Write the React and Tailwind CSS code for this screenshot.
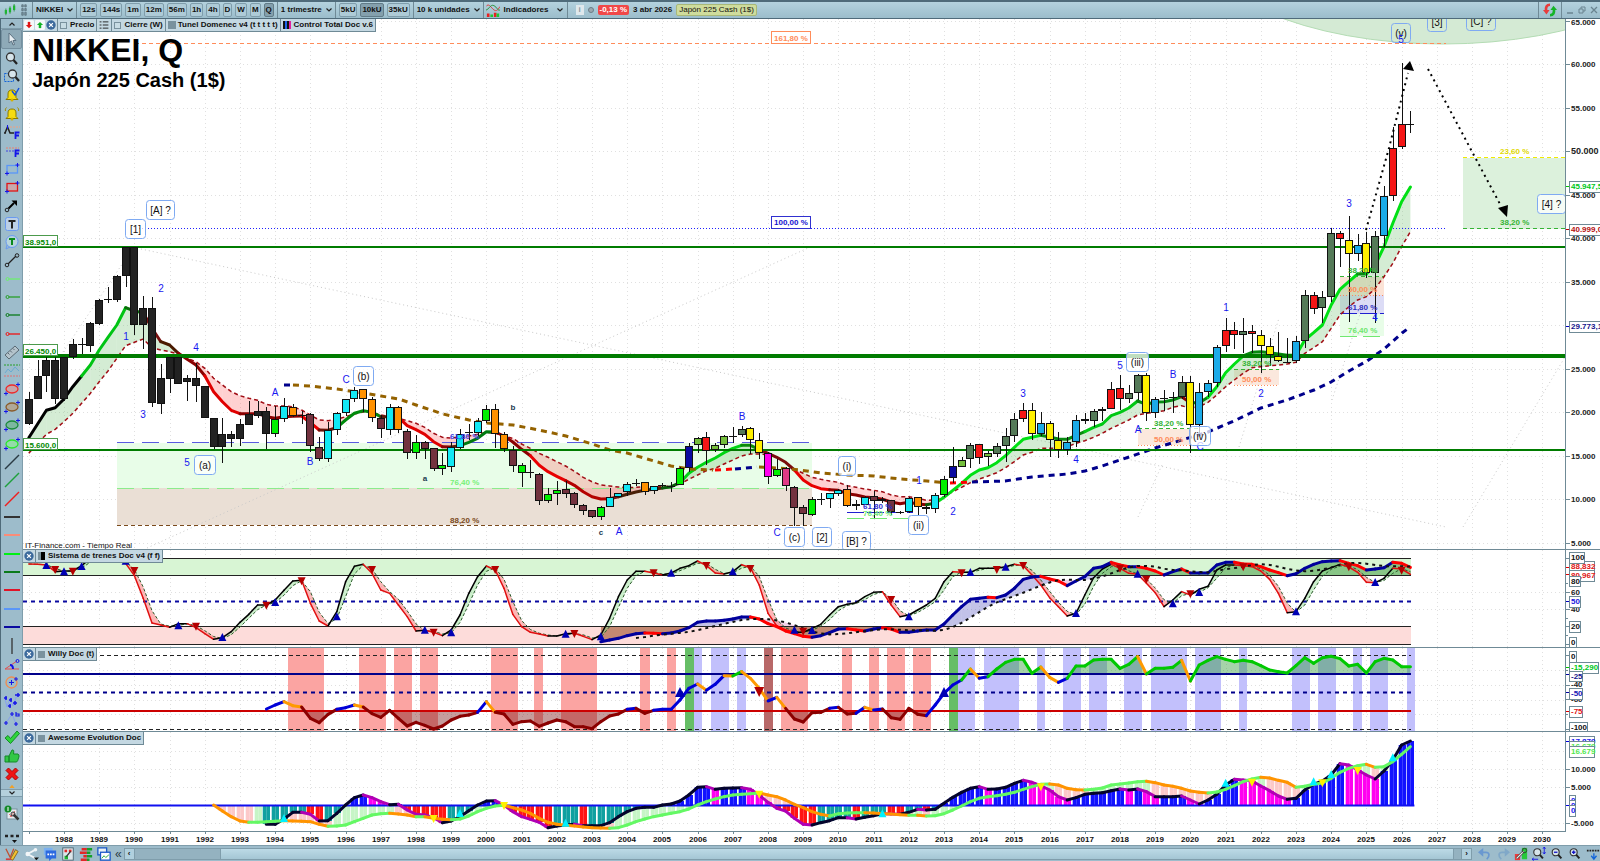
import React from "react";

const FONT = '"Liberation Sans", Arial, sans-serif';

/* ---------- time scale ---------- */
const X0 = 28.8;
const STEP = 8.8;
const LAST = 157;
const qx = (i) => X0 + STEP * i;
const YEARS = Array.from({ length: 44 }, (_, k) => 1987 + k);
const yearX = (y) => qx((y - 1987) * 4);

/* values are stored in thirds of a unit below a base line */
const series = (...parts) => {
  const out = {};
  parts.forEach(([start, base, values]) =>
    values.forEach((v, k) => {
      out[start + k] = base + v / 3;
    })
  );
  return out;
};
const keysOf = (s) => Object.keys(s).map(Number).sort((a, b) => a - b);
const linePath = (s, from = -1, to = 999) =>
  keysOf(s)
    .filter((i) => i >= from && i <= to)
    .map((i, k) => `${k ? "L" : "M"}${qx(i).toFixed(1)} ${s[i].toFixed(1)}`)
    .join("");
const poly = (pts) => pts.map((p, k) => `${k ? "L" : "M"}${p[0]} ${p[1]}`).join("");

/* ---------- candles: top, bottom, high, low, colour ---------- */
const C = {
  k: "#222222", g: "#00f000", c: "#12e8f4", o: "#ff9100", p: "#73323f", n: "#0a0aa0",
  l: "#74bf3c", r: "#f51616", d: "#557a58", y: "#fff000", m: "#ff00ee", q: "#e03a86", s: "#1cabe8",
};
const CANDLES = [
  [0, 200, `596 671 577 675 k;527 597 480 597 k;480 528 470 575 k;480 597 470 613 k;470 597 470 604 k;433 472 418 478 k;431 433 415 462 k;370 437 366 455 k;300 371 297 374 k;297 299 262 308 k;227 300 224 305 k;142 228 142 260 k;142 376 142 405 k;325 376 287 448 k;325 610 292 620 k;535 611 492 641 k;470 536 470 580 k;470 551 470 553 k;535 547 524 602 k;535 558 490 606 k;558 653 558 653 k;654 741 654 748 k;703 741 655 789 k;703 716 694 741 k;673 716 658 737 k;641 674 602 674 k;634 647 602 655 k;633 703 620 748 k;658 703 618 710 g;618 658 595 666 c;622 648 612 652 o;644 646 633 672 k;643 737 640 757 p;740 778 710 784 p;691 778 665 785 c;640 690 635 706 c;598 638 596 648 c;571 598 562 606 c;568 596 568 635 o;596 653 590 666 o;653 688 645 713 p;622 690 612 705 c;622 690 617 698 o;694 758 688 778 p;727 758 706 778 g;727 747 722 777 p;744 808 744 812 p;796 808 758 824 g;740 800 725 817 c;703 744 688 748 c;697 699 672 720 k;664 698 655 708 c;628 664 616 670 g;628 703 612 745 o`],
  [54, 380, `163 207 157 215 o;210 259 197 275 p;256 278 248 321 g;276 278 240 293 k;282 364 280 375 p;343 364 323 368 g;331 341 303 374 g;328 341 303 355 p;340 374 337 384 p;376 394 373 405 p;391 410 391 415 p;382 412 378 421 g;352 382 325 382 c;340 352 338 352 c;311 336 307 348 c;309 311 297 318 k;307 337 307 345 o;319 334 318 341 c;314 319 308 321 g;317 319 306 337 k;264 316 260 316 g;199 263 190 275 n;174 194 170 218 l;172 214 157 255 r;196 211 190 217 l;169 196 165 205 l;168 170 140 190 k;147 166 138 172 d;144 181 142 222 y;181 220 160 237 y;220 291 215 312 m;267 287 237 292 g;265 317 262 333 q;322 384 318 437 p;382 401 374 437 p;358 404 352 407 g;356 358 338 374 k;340 356 338 384 c;329 341 327 347 c;328 377 316 381 o;373 377 361 389 g;352 375 348 375 c;348 364 333 413 p;358 364 352 370 g;360 395 360 405 p;395 400 393 403 n;355 397 350 400 c;352 382 350 408 o;380 387 378 402 o;344 386 340 398 c;296 346 288 350 g;259 294 200 308 n;239 260 230 260 l;194 238 190 265 d;192 233 192 253 r`],
  [109, 200, `760 772 753 797 l;738 761 729 772 d;707 737 685 785 d;656 707 640 725 d;631 656 610 665 r;631 701 610 720 y;668 703 636 708 s;668 721 662 772 y;721 750 695 773 y;727 750 710 765 s;661 725 645 740 s;658 663 640 672 y;634 664 628 682 d;626 634 622 664 d;566 626 546 628 r;563 598 526 630 r;578 598 555 610 d;526 578 522 600 d;526 640 520 664 y;596 640 590 655 s;594 596 570 632 k;590 594 577 640 s;547 590 528 598 d;547 674 528 760 y;576 674 550 700 s;548 576 540 590 s;442 548 436 560 s;391 438 355 455 r;391 406 366 448 r;394 406 355 458 d;394 403 375 460 r;404 438 391 518 y;439 465 415 498 y;468 484 395 486 y;485 487 415 490 k;424 484 408 490 s;286 424 270 445 d;286 328 275 343 r;290 325 272 368 d;98 290 84 305 d;98 118 94 202 r;119 163 49 365 y;134 163 103 182 s;128 220 97 235 y;108 220 92 370 d`],
  [154, 10, `559 678 528 710 s;414 557 352 572 r;343 412 160 417 r;342 344 303 370 k`],
].flatMap(([start, base, rows]) =>
  rows.split(";").map((row, k) => {
    const [t, b, h, l, c] = row.split(" ");
    return { i: start + k, t: base + t / 3, b: base + b / 3, h: base + h / 3, l: base + l / 3, c: C[c] };
  })
);

/* ---------- moving averages ---------- */
const FAST = series(
  [0, 200, [713, 672, 631, 623, 597, 560, 528, 495, 450, 412, 375, 323, 333, 338, 385, 425, 435, 460, 478, 495, 527, 575, 605, 631, 641, 641, 641, 650, 655, 650, 649, 648, 668, 690, 691, 683, 660, 640, 632, 637, 650, 650, 652, 677, 689, 703, 725, 740, 741, 737, 727, 715, 695]],
  [53, 380, [156, 168, 186, 208, 227, 256, 275, 289, 302, 316, 335, 350, 357, 356, 350, 343, 336, 331, 328, 324, 320, 308, 280, 262, 247, 234, 218, 205, 196, 196, 208, 220, 232, 247, 270, 300, 317, 326, 329, 331, 341, 345, 351, 353, 358, 366, 371, 367, 372, 374, 370, 352, 331, 310, 286, 270]],
  [109, 200, [803, 788, 767, 742, 718, 712, 706, 711, 717, 718, 706, 695, 682, 672, 647, 637, 624, 603, 613, 606, 605, 600, 590, 608, 608, 592, 560, 518, 492, 468, 457, 455, 458, 462, 466, 466, 420, 398, 375, 315, 268, 245, 222, 222, 195, 140]],
  [155, 10, [640, 575, 531]]
);
const FAST_COLOURS = [
  [0, 6, "#000000"], [6, 11, "#00c414"], [11, 13, "#0a6e0a"], [13, 15, "#7a1010"], [15, 17, "#4a1a00"],
  [17, 20, "#8b0000"], [20, 24, "#e00000"], [24, 31, "#8b0000"], [31, 33, "#e80000"], [33, 35, "#6a1408"],
  [35, 40, "#008a0c"], [40, 42, "#5a1c08"], [42, 47, "#e00000"], [47, 48, "#8b0000"], [48, 49, "#5a1c08"],
  [49, 53, "#007a10"], [53, 57, "#8b0000"], [57, 61, "#e80000"], [61, 66, "#b40000"], [66, 67, "#7a1010"],
  [67, 72, "#4a2008"], [72, 74, "#0a5c0a"], [74, 81, "#00d414"], [81, 83, "#0a8a0a"], [83, 87, "#7a0c0c"],
  [87, 91, "#e80000"], [91, 102, "#8b0000"], [102, 103, "#0a5c0a"], [103, 115, "#00e014"], [115, 120, "#078a10"],
  [120, 126, "#00c814"], [126, 131, "#078a10"], [131, 132, "#8b0000"], [132, 134, "#078a10"], [134, 138, "#00e014"],
  [138, 144, "#078a10"], [144, 151, "#00e014"], [151, 152, "#078a10"], [152, 157, "#00e014"],
];
const SLOW = series(
  [0, 200, [760, 730, 703, 688, 665, 640, 610, 580, 545, 513, 475, 437, 427, 417, 443, 450, 455, 462, 475, 485, 505, 535, 555, 575, 587, 595, 601, 613, 618, 618, 620, 630, 645, 660, 662, 658, 650, 642, 636, 637, 645, 650, 655, 662, 670, 682, 700, 712, 714, 710, 708, 703, 697]],
  [53, 380, [160, 168, 175, 192, 205, 220, 232, 245, 258, 274, 292, 305, 315, 318, 321, 323, 322, 320, 320, 320, 318, 312, 298, 285, 272, 265, 252, 240, 228, 222, 222, 224, 232, 247, 268, 280, 292, 298, 303, 307, 317, 322, 327, 331, 335, 345, 350, 350, 355, 361, 360, 350, 335, 322, 308, 297]],
  [109, 200, [828, 818, 803, 785, 765, 757, 745, 745, 745, 740, 730, 722, 712, 700, 685, 673, 660, 645, 640, 637, 632, 622, 617, 625, 620, 607, 585, 560, 540, 520, 503, 500, 497, 495, 492, 487, 460, 443, 425, 385, 345, 320, 300, 290, 265, 230, 190, 140, 95]]
);
const TREND = [
  ["#00008b", [[284, 385], [291, 385]]],
  ["#946200", [[293, 385], [310, 386], [337, 389], [363, 393], [381, 396], [399, 399], [416, 405], [443, 414], [469, 420], [487, 423], [513, 425], [539, 430], [566, 436], [592, 444], [610, 450], [627, 453], [654, 461], [671, 466], [689, 469], [713, 470]]],
  ["#ff0000", [[715, 470], [733, 469]]],
  ["#00008b", [[735, 469], [757, 467]]],
  ["#946200", [[759, 467], [777, 468], [800, 470], [821, 473], [847, 475], [874, 476], [900, 479], [927, 481], [947, 483]]],
  ["#ff0000", [[950, 483], [970, 482]]],
  ["#00008b", [[972, 482], [1005, 481], [1032, 477], [1067, 474], [1085, 471], [1102, 466], [1129, 457], [1155, 448], [1182, 440], [1208, 432], [1234, 421], [1261, 408], [1287, 400], [1314, 390], [1331, 382], [1349, 371], [1367, 361], [1384, 349], [1402, 333], [1410, 327]]],
];

const crossPieces = (a, b) => {
  const out = [];
  for (let i = 0; i < LAST; i++) {
    if (a[i] === undefined || b[i] === undefined || a[i + 1] === undefined || b[i + 1] === undefined) continue;
    out.push({ i, up: a[i] + a[i + 1] < b[i] + b[i + 1], d: `M${qx(i)} ${a[i]}L${qx(i + 1)} ${a[i + 1]}L${qx(i + 1)} ${b[i + 1]}L${qx(i)} ${b[i]}Z` });
  }
  return out;
};

/* ---------- chart annotations ---------- */
const WAVES = [
  ["2", 161, 292], ["1", 126, 340], ["4", 196, 351], ["3", 143, 418], ["5", 187, 466], ["A", 275, 396], ["C", 346, 383], ["B", 310, 465],
  ["A", 619, 535], ["B", 742, 420], ["C", 777, 536], ["1", 919, 484], ["2", 953, 515], ["3", 1023, 397], ["4", 1076, 463], ["5", 1120, 369],
  ["A", 1138, 433], ["B", 1173, 378], ["C", 1200, 450], ["1", 1226, 311], ["2", 1261, 397], ["3", 1349, 207], ["4", 1375, 321],
];
const SMALL_WAVES = [["a", 425, 481], ["b", 513, 410], ["c", 601, 535]];
const BOXES = [
  ["[A] ?", 146, 200, 28], ["[1]", 125, 219, 20], ["(a)", 194, 455, 21], ["(b)", 353, 366, 20], ["(i)", 838, 456, 17], ["(ii)", 908, 515, 20],
  ["(c)", 784, 527, 20], ["[2]", 812, 527, 19], ["[B] ?", 842, 531, 28], ["(iii)", 1126, 352, 22], ["(iv)", 1189, 426, 21], ["(v)", 1391, 23, 19],
  ["[3]", 1427, 12, 19], ["[C] ?", 1466, 11, 29], ["[4] ?", 1537, 194, 28],
];
const PCTS = [
  ["61,80 %", 450, 439, "#3c3ce0"], ["76,40 %", 450, 485, "#78f078"], ["88,20 %", 450, 523, "#7a4a1c"],
  ["61,80 %", 863, 509, "#3030d0"], ["76,40 %", 863, 516, "#70e870"],
  ["38,20 %", 1154, 426, "#35b335"], ["50,00 %", 1154, 442, "#ff8c5a"],
  ["38,20 %", 1242, 366, "#35b335"], ["50,00 %", 1242, 382, "#ff8c5a"],
  ["38,20 %", 1348, 273, "#35b335"], ["50,00 %", 1348, 292, "#ff8c5a"], ["61,80 %", 1348, 310, "#3030c0"], ["76,40 %", 1348, 333, "#6ee66e"],
  ["23,60 %", 1500, 154, "#dfd800"], ["38,20 %", 1500, 225, "#35b335"],
];

const Tag = ({ x = 1569, y, w, color = "#111", text, h = 11 }) => (
  <g>
    <rect x={x + 0.5} y={Math.round(y - h / 2) + 0.5} width={w} height={h} fill="#fff" stroke="#6f8a96" />
    <text x={x + 2} y={Math.round(y + 3)} fontSize="8" fontWeight="700" fill={color}>{text}</text>
  </g>
);

const Grid = ({ top, bottom, rows }) => (
  <g stroke="#e0e0e0" strokeDasharray="1 3">
    {YEARS.map((y) => <path key={y} d={`M${Math.round(yearX(y)) + 0.5} ${top}V${bottom}`} />)}
    {rows.map((y) => <path key={y} d={`M23 ${Math.round(y) + 0.5}H1565`} />)}
  </g>
);

const AxisLine = ({ top, bottom }) => <path d={`M1565.5 ${top}V${bottom}`} stroke="#6f8a96" fill="none" />;

function PriceChart() {
  const py = (v) => 586 - 8.7 * v;
  const ticks = [65, 60, 55, 50, 45, 40, 35, 30, 25, 20, 15, 10, 5];
  const pieces = crossPieces(FAST, SLOW);
  return (
    <svg viewBox="23 19 1577 531" className="block h-auto w-full bg-white" fontFamily={FONT} role="img" aria-label="NIKKEI, velas trimestrales">
      <defs><clipPath id="plot"><rect x="23" y="19" width="1543" height="530" /></clipPath></defs>
      <Grid top={19} bottom={549} rows={ticks.map(py)} />
      <g clipPath="url(#plot)">
        <ellipse cx="1443" cy="-66" rx="250" ry="110" fill="#d4ead4" stroke="#b4dcb4" />
        <rect x="117" y="443" width="695" height="45" fill="#e8fde8" />
        <rect x="117" y="488" width="695" height="37" fill="#eadfd5" />
        <rect x="1463" y="158" width="102" height="71" fill="#dcf1dc" />
        <rect x="1340" y="277" width="44" height="18" fill="#fbe3d6" />
        <rect x="1340" y="295" width="44" height="19" fill="#dcdcf6" />
        <rect x="1340" y="314" width="44" height="22" fill="#e8fde8" />
        <rect x="1234" y="369" width="45" height="16" fill="#fbe8dd" />
        <rect x="1138" y="429" width="53" height="16" fill="#fbe8dd" />
        <g stroke="#c9c9c9" strokeDasharray="1 3" fill="none">
          <path d="M63 352L133 248M141 249L1446 527M147 548L808 248M1138 517L1162 465M1239 447L1279 318M1332 400L1384 240M1463 527L1565 357" />
        </g>
        {pieces.map((p) => <path key={p.i} d={p.d} fill={p.up ? "rgb(120 196 120 / 0.32)" : "rgb(255 120 120 / 0.34)"} />)}
        <g fill="none">
          <path d="M117 442.500H812" stroke="#5a5ae0" strokeDasharray="17 8" />
          <path d="M117 488.500H812" stroke="#8ceb8c" strokeDasharray="17 8" />
          <path d="M117 525.500H812" stroke="#7a4a1c" strokeDasharray="4 3" />
          <path d="M135 43.500H1446" stroke="#ff8c5a" strokeDasharray="4 3" />
          <path d="M139 228.500H1446" stroke="#2020ff" strokeDasharray="1 2" />
          <path d="M1463 157.500H1565" stroke="#f0ea00" strokeDasharray="4 3" />
          <path d="M1463 228.500H1565M1340 276.500H1384M1234 369.500H1279M1138 428.500H1200" stroke="#35b335" strokeDasharray="4 3" />
          <path d="M1340 295.500H1384M1234 385.500H1279M1138 445.500H1191" stroke="#ff8c5a" strokeDasharray="1 2" />
          <path d="M1340 313.500H1384M847 512.500H913" stroke="#2020d0" strokeDasharray="17 3" />
          <path d="M1340 336.500H1384M847 518.500H913" stroke="#70e870" strokeDasharray="17 6" />
        </g>
        <path d={linePath(SLOW)} fill="none" stroke="#a00c14" strokeWidth="1.500" strokeDasharray="4 3" />
        {FAST_COLOURS.map(([a, b, c]) => <path key={a} d={linePath(FAST, a, b)} fill="none" stroke={c} strokeWidth="3" strokeLinejoin="round" strokeLinecap="round" />)}
        {TREND.map(([c, pts], k) => <path key={k} d={poly(pts)} fill="none" stroke={c} strokeWidth="3" strokeDasharray="6 5" />)}
        <g shapeRendering="crispEdges">
          <path d="M23 247H1565" stroke="#007c00" strokeWidth="2" />
          <path d="M23 356H1565" stroke="#007c00" strokeWidth="4" />
          <path d="M23 450H1565" stroke="#007c00" strokeWidth="2" />
          {CANDLES.map((k) => {
            const x = Math.round(qx(k.i) - 4);
            const t = Math.round(k.t), b = Math.round(k.b);
            return (
              <g key={k.i}>
                <path d={`M${x + 4} ${Math.round(k.h)}V${Math.round(k.l)}`} stroke="#111" />
                {b - t < 2
                  ? <rect x={x} y={t} width="8" height="1" fill="#111" />
                  : <rect x={x + 0.5} y={t + 0.5} width="7" height={b - t - 1} fill={k.c} stroke="#111" />}
              </g>
            );
          })}
        </g>
        {PCTS.map(([t, x, y, c]) => <text key={t + x} x={x} y={y} fontSize="8" fontWeight="700" fill={c}>{t}</text>)}
        <rect x="771.500" y="31.500" width="39" height="12" fill="#fff" stroke="#ff8c5a" />
        <text x="774" y="41" fontSize="8" fontWeight="700" fill="#ff8c5a">161,80 %</text>
        <rect x="771.500" y="216.500" width="39" height="12" fill="#fff" stroke="#3030d0" />
        <text x="774" y="225" fontSize="8" fontWeight="700" fill="#1414d0">100,00 %</text>
        {[["38.951,0", 235], ["26.450,0", 344], ["15.600,0", 438]].map(([t, y]) => (
          <g key={t}>
            <rect x="23.500" y={y + 0.5} width="34" height="11" fill="#fff" stroke="#4c9a4c" />
            <text x="25" y={y + 10} fontSize="8" fontWeight="700" fill="#008a00">{t}</text>
          </g>
        ))}
        <g stroke="#000" strokeWidth="2" strokeDasharray="2 4" fill="none">
          <path d="M1366 230L1389 148L1408 73" />
          <path d="M1428 69L1501 206" />
        </g>
        <path d="M1410 61L1414 71L1403 69ZM1498 208L1508 205L1507 217Z" fill="#000" />
        {WAVES.map(([t, x, y], k) => <text key={k} x={x} y={y} fontSize="10" fontWeight="400" fill="#1818f0" textAnchor="middle">{t}</text>)}
        {SMALL_WAVES.map(([t, x, y]) => <text key={t} x={x} y={y} fontSize="8" fontWeight="700" fill="#1c3a50" textAnchor="middle">{t}</text>)}
        {BOXES.map(([t, x, y, w]) => (
          <g key={t}>
            <rect x={x + 0.5} y={y + 0.5} width={w} height="19" rx="3" fill={y < 30 ? "none" : "rgb(255 255 255 / 0.75)"} stroke="#7faaf2" />
            <text x={x + w / 2 + 0.5} y={y + 14} fontSize="10" fontWeight="400" fill="#111" textAnchor="middle">{t}</text>
          </g>
        ))}
        <text x="1401" y="43" fontSize="10" fontWeight="400" fill="#1818f0" textAnchor="middle">5</text>
        <text x="25" y="548" fontSize="8" fontWeight="400" fill="#111">IT-Finance.com - Tiempo Real</text>
      </g>
      <AxisLine top={19} bottom={549} />
      {ticks.filter((v) => v !== 30).map((v) => (
        <g key={v}>
          <path d={`M1566 ${Math.round(py(v)) + 0.5}H1570`} stroke="#6f8a96" />
          <text x="1571" y={Math.round(py(v)) + (v === 65 ? 4 : 3)} fontSize={v === 50 ? 9 : 8} fontWeight="700" fill="#222">{v}.000</text>
        </g>
      ))}
      <path d="M1566 186.500H1569" stroke="#00c800" /><path d="M1566 229.500H1569" stroke="#c00000" /><path d="M1566 326.500H1569" stroke="#0000c0" />
      <Tag y={186} w={40} color="#00c81a" text="45.947,5" />
      <Tag y={229} w={40} color="#b40f0f" text="40.999,0" />
      <Tag y={326} w={40} color="#14148c" text="29.773,1" />
      <path d="M23 549.500H1600" stroke="#6f8a96" />
    </svg>
  );
}

/* ---------- Sistema de trenes ---------- */
const OSC = series(
  [0, 545, [57, 58, 60, 80, 78, 78, 62, 40, 38, 38, 44, 55, 92, 160, 234, 240, 247, 236, 236, 248, 266, 283, 278, 260, 232, 208, 180, 180, 165, 136, 108, 106, 175, 228, 243, 200, 110, 64, 58, 85, 135, 145, 180, 215, 258, 256, 262, 272, 255, 210, 145, 95, 63, 75, 130, 208, 245, 262, 267, 273, 273, 266, 265, 274, 284, 270, 220, 155, 105, 79, 79, 84, 90, 84, 70, 62, 48, 62, 84, 87, 80, 59, 68, 120, 205, 243, 255, 262]],
  [88, 545, [262, 250, 238, 210, 185, 178, 173, 155, 142, 140, 180, 215, 210, 195, 180, 160, 110, 80, 82, 82, 70, 70, 70, 65, 58, 62, 90, 120, 158, 185, 213, 205, 150, 98, 72, 58, 70, 85, 88, 115, 143, 185, 165, 140, 150, 133, 124, 75, 60, 60, 62, 65, 78, 103, 145, 203, 200, 160, 110, 78, 68, 58, 66, 82, 112, 113, 100, 70, 72, 88]]
);
const TRAIN = series(
  [65, 545, [290, 285, 280, 272, 266, 264, 265, 266, 264, 258, 248, 232, 228, 228, 226, 222, 216, 216, 222, 236, 245, 258, 266, 274, 277, 272, 263, 252, 251, 255, 258, 252, 248, 252, 262, 262, 258, 255, 255, 237, 210, 185, 163, 160, 157, 158, 150, 130, 103, 96, 94, 102, 108, 122, 108, 95, 70, 65, 52, 60, 65, 65, 70, 78, 90, 80, 72, 84, 84, 84, 60, 52, 52, 57, 58, 65, 75, 83, 92, 86, 70, 58, 50, 48, 47, 55, 62, 75, 72, 68, 52, 55, 67]]
);
const lagged = (s, n) => {
  const out = {};
  keysOf(s).forEach((i) => {
    let sum = 0, count = 0;
    for (let k = 0; k < n; k++) if (s[i - k] !== undefined) { sum += s[i - k]; count++; }
    out[i] = sum / count;
  });
  return out;
};
const OSC_SIGNAL = lagged(OSC, 2);
const TRAIN_SIGNAL = lagged(TRAIN, 6);
const segments = (s, colour) =>
  keysOf(s).slice(1).map((i) => ({ i, d: `M${qx(i - 1)} ${s[i - 1]}L${qx(i)} ${s[i]}`, c: colour(s[i - 1], s[i], i) }));
const Up = ({ x, y, c, r = 4 }) => <path d={`M${x} ${y - r - 1}L${x + r} ${y + r - 1}H${x - r}Z`} fill={c} />;
const Down = ({ x, y, c, r = 4 }) => <path d={`M${x} ${y + r + 1}L${x + r} ${y - r + 1}H${x - r}Z`} fill={c} />;

function TrainsChart() {
  const ups = [[2, 63], [4, 82], [6, 66], [11, 50], [17, 244], [22, 279], [28, 174], [35, 217], [45, 257], [48, 265], [61, 269], [65, 277], [73, 86], [80, 82], [87, 257], [89, 258], [100, 217], [107, 84], [111, 68], [119, 207], [126, 89], [130, 178], [133, 144], [144, 202], [153, 114]];
  const downs = [[3, 72], [5, 77], [12, 75], [19, 242], [27, 179], [31, 106], [39, 72], [46, 260], [53, 72], [62, 264], [71, 82], [77, 60], [82, 69], [88, 257], [98, 162], [106, 82], [110, 72], [113, 60], [124, 68], [127, 101], [132, 145], [138, 64], [150, 64], [156, 74]];
  return (
    <svg viewBox="23 550 1577 98" className="block h-auto w-full bg-white" fontFamily={FONT} role="img" aria-label="Sistema de trenes">
      <defs>
        <clipPath id="trainsHigh"><rect x="23" y="550" width="1400" height="26" /></clipPath>
        <clipPath id="trainsLow"><rect x="23" y="626" width="1400" height="20" /></clipPath>
        <clipPath id="trainsMid"><rect x="23" y="576" width="1400" height="50" /></clipPath>
      </defs>
      <Grid top={550} bottom={648} rows={[592, 609]} />
      <rect x="23" y="559" width="1388" height="17" fill="#d8f5d4" />
      <rect x="23" y="627" width="1388" height="17" fill="#fddcda" />
      <path clipPath="url(#trainsHigh)" d={`${linePath(TRAIN)}L1411 576L600 576Z`} fill="rgb(40 140 40 / 0.45)" />
      <path clipPath="url(#trainsLow)" d={`${linePath(TRAIN, 65, 104)}L944 626L601 626Z`} fill="rgb(150 70 30 / 0.55)" />
      {crossPieces(TRAIN, TRAIN_SIGNAL).map((p) => <path key={p.i} clipPath="url(#trainsMid)" d={p.d} fill={p.up ? "rgb(80 80 190 / 0.35)" : "rgb(210 100 180 / 0.3)"} />)}
      {crossPieces(OSC, OSC_SIGNAL).map((p) => <path key={p.i} d={p.d} fill={p.up ? "rgb(140 220 140 / 0.45)" : "rgb(250 110 110 / 0.5)"} />)}
      <path d="M23 558.500H1411M23 575.500H1411M23 626.500H1411M23 644.500H1411" stroke="#222" />
      <path d="M23 601.500H1411" stroke="#0a0aa0" strokeWidth="2" strokeDasharray="4 4" />
      <path d={linePath(OSC_SIGNAL)} fill="none" stroke="#2a5a2a" strokeDasharray="3 2" />
      {segments(OSC, (a, b) => (b <= a ? "#000" : "#e01010")).map((s) => <path key={s.i} d={s.d} stroke={s.c} strokeWidth="1.500" strokeLinecap="round" />)}
      {segments(TRAIN, (a, b) => (b <= a ? "#00009c" : "#ff0000")).map((s) => <path key={s.i} d={s.d} stroke={s.c} strokeWidth="3" strokeLinecap="round" />)}
      <path d={linePath(TRAIN_SIGNAL, 69)} fill="none" stroke="#111" strokeWidth="2" strokeDasharray="3 4" />
      {ups.map(([i, y]) => <Up key={i} x={qx(i)} y={545 + y / 3} c="#0000b4" />)}
      {downs.map(([i, y]) => <Down key={i} x={qx(i)} y={545 + y / 3} c="#b40000" />)}
      <AxisLine top={550} bottom={648} />
      <path d="M1566 558.500H1570M1566 592.500H1570M1566 609.500H1570M1566 626.500H1570M1566 644.500H1570M1566 583.500H1568M1566 618.500H1568M1566 635.500H1568" stroke="#6f8a96" />
      <path d="M1566 567.500H1569M1566 574.500H1569" stroke="#e00000" /><path d="M1566 601.500H1569" stroke="#0000c0" />
      <text x="1571" y="595" fontSize="8" fontWeight="700" fill="#222">60</text>
      <text x="1571" y="612" fontSize="8" fontWeight="700" fill="#222">40</text>
      <Tag y={566} w={25} color="#e01414" text="88,832" />
      <Tag y={557} w={15} text="100" />
      <Tag y={575} w={25} color="#e01414" text="80,967" />
      <Tag y={581} w={11} text="80" h={10} />
      <Tag y={601} w={11} color="#1818e0" text="50" />
      <Tag y={626} w={11} text="20" />
      <Tag y={642} w={7} text="0" />
      <path d="M23 647.500H1600" stroke="#6f8a96" />
    </svg>
  );
}

/* ---------- Willy ---------- */
const WILLY = series(
  [27, 545, [492, 480, 470, 482, 486, 520, 533, 508, 493, 488, 480, 486, 506, 517, 496, 520, 543, 532, 541, 552, 543, 525, 514, 510, 502, 470, 502, 507, 538, 530, 528, 544, 534, 525, 530, 545, 545, 551, 530, 513, 507, 493, 490, 505, 496, 493, 493, 465, 430, 417, 436, 418, 392, 393, 380, 400, 430, 468, 457, 490, 522]],
  [88, 545, [531, 503, 502, 490, 487, 507, 505, 487, 495, 492, 518, 523, 490, 508, 512, 480, 445, 420, 405, 372, 400, 395, 372, 352, 343, 343, 385, 366, 397, 412, 400, 363, 363, 345, 343, 343, 370, 358, 335, 387, 370, 370, 367, 346, 408, 360, 346, 335, 343, 350, 346, 350, 362, 375, 380, 384, 362, 338, 355, 338, 334, 341, 363, 358, 384, 350, 340, 345, 365, 365]]
);
const BANDS = [
  ["r", 288, 324], ["r", 359, 386], ["r", 394, 412], ["r", 420, 438], ["r", 491, 518], ["r", 534, 543], ["r", 561, 597], ["r", 640, 650], ["r", 667, 676],
  ["g", 685, 694], ["b", 694, 702], ["b", 711, 729], ["b", 737, 746], ["d", 764, 773], ["r", 781, 808], ["r", 842, 852], ["r", 869, 879], ["r", 887, 905],
  ["r", 913, 931], ["g", 949, 958], ["b", 958, 975], ["b", 984, 1019], ["b", 1037, 1045], ["b", 1063, 1081], ["b", 1089, 1107], ["b", 1124, 1142],
  ["b", 1151, 1187], ["b", 1195, 1221], ["b", 1239, 1247], ["b", 1292, 1310], ["b", 1318, 1336], ["b", 1353, 1362], ["b", 1370, 1388], ["b", 1407, 1415],
];
const BAND_COLOURS = { r: "#fba4a2", g: "#66be66", b: "#c2c0fc", d: "#b86868" };

function WillyChart() {
  const high = 674, low = 711;
  const colour = (a, b) => {
    if (b < high) return "#00c800";
    if (b > low - 1 && a > low - 9) return "#8b0000";
    if (a > low && b > low - 3) return "#8b0000";
    return b <= a ? "#0000d8" : "#ff9a00";
  };
  return (
    <svg viewBox="23 648 1577 84" className="block h-auto w-full bg-white" fontFamily={FONT} role="img" aria-label="Willy Doc">
      <defs>
        <clipPath id="willyHigh"><rect x="23" y="648" width="1400" height="26" /></clipPath>
        <clipPath id="willyLow"><rect x="23" y="711" width="1400" height="21" /></clipPath>
      </defs>
      <Grid top={648} bottom={732} rows={[670, 685, 700, 714]} />
      {BANDS.map(([k, a, b]) => <rect key={a} x={a} y="648" width={b - a} height="84" fill={BAND_COLOURS[k]} />)}
      <path clipPath="url(#willyHigh)" d={`${linePath(WILLY)}L${qx(157)} 674L266 674Z`} fill="rgb(40 150 50 / 0.42)" />
      <path clipPath="url(#willyLow)" d={`${linePath(WILLY)}L${qx(157)} 711L266 711Z`} fill="rgb(120 20 20 / 0.42)" />
      <path d="M23 655.500H1411M23 729.500H1411" stroke="#222" strokeDasharray="4 3" />
      <path d="M23 674H1411" stroke="#00008b" strokeWidth="2" />
      <path d="M23 692.500H1411" stroke="#00008b" strokeWidth="2" strokeDasharray="4 4" />
      <path d="M23 711H1411" stroke="#cc0000" strokeWidth="2" />
      {segments(WILLY, colour).map((s) => <path key={s.i} d={s.d} stroke={s.c} strokeWidth="3" strokeLinecap="round" />)}
      <Up x={qx(74)} y={693} c="#0000b4" r={5} />
      <Down x={qx(83)} y={691} c="#b40000" r={5} />
      <Up x={qx(104)} y={693} c="#0000b4" r={5} />
      <AxisLine top={648} bottom={732} />
      <path d="M1566 655.500H1570M1566 670.500H1568M1566 685.500H1570M1566 699.500H1570M1566 714.500H1568M1566 729.500H1570" stroke="#6f8a96" />
      <path d="M1566 667.500H1569" stroke="#00c800" /><path d="M1566 674.500H1569M1566 692.500H1569" stroke="#0000a0" /><path d="M1566 711.500H1569" stroke="#e00000" />
      <text x="1571" y="687" fontSize="8" fontWeight="700" fill="#222">-40</text>
      <text x="1571" y="702" fontSize="8" fontWeight="700" fill="#222">-60</text>
      <Tag y={656} w={7} text="0" />
      <Tag y={667} w={29} color="#00c81a" text="-15,290" />
      <Tag y={676} w={13} color="#14148c" text="-25" h={10} />
      <Tag y={693} w={13} color="#1414b4" text="-50" />
      <Tag y={711} w={13} color="#e01414" text="-75" />
      <Tag y={727} w={18} text="-100" />
      <path d="M23 731.500H1600" stroke="#6f8a96" />
    </svg>
  );
}

/* ---------- Awesome Evolution ---------- */
const AO = series(
  [27, 545, [838, 838, 822, 802, 802, 808, 828, 827, 805, 780, 758, 750, 758, 770, 779, 778, 795, 808, 810, 818, 833, 828, 815, 797, 780, 768, 767, 780, 800, 815, 823, 832, 848, 843, 840, 838, 842, 842, 842, 833, 815, 800, 790, 787, 787, 780, 777, 768, 750, 727, 725, 733, 730, 729, 728, 733, 750, 772, 790, 798, 820]],
  [88, 545, [838, 840, 833, 827, 818, 818, 822, 817, 812, 806, 807, 808, 802, 793, 795, 793, 775, 757, 742, 730, 725, 733, 732, 727, 715, 706, 712, 722, 735, 755, 765, 758, 748, 745, 743, 737, 732, 735, 732, 740, 755, 755, 755, 753, 765, 777, 765, 748, 720, 703, 705, 708, 723, 737, 753, 763, 760, 735, 718, 708, 690, 656, 660, 675, 690, 702, 678, 645, 600, 588]]
);
const AO_SLOW = series(
  [21, 545, [780, 798, 815, 828, 832, 832, 830, 829, 827, 828, 829, 830, 838, 844, 843, 840, 830, 820, 810, 806, 805, 807, 810, 815, 815, 820, 823, 824, 822, 813, 800, 790, 783, 781, 788, 795, 805, 820, 832, 838, 841, 843, 846, 848, 849, 850, 848, 840, 830, 822, 815, 810, 805, 800, 792, 780, 770, 762, 755, 750, 748, 746, 744, 750, 755, 765, 778]],
  [88, 545, [788, 800, 808, 813, 806, 804, 803, 803, 804, 806, 807, 809, 811, 811, 813, 812, 806, 795, 783, 770, 760, 755, 752, 748, 742, 733, 725, 718, 717, 720, 730, 734, 735, 733, 729, 720, 717, 714, 710, 709, 713, 720, 724, 730, 738, 742, 744, 741, 733, 722, 710, 702, 697, 699, 706, 712, 727, 724, 718, 714, 700, 682, 670, 662, 658, 667, 665, 650, 628, 605]]
);

function AwesomeChart() {
  const zero = 805.3;
  const bars = [];
  for (let i = 22; i <= LAST; i++) {
    const a = AO[i], s = AO_SLOW[i];
    const rising = AO[i - 1] === undefined || a <= AO[i - 1];
    const pale = AO_SLOW[i] <= AO_SLOW[i - 1] ? "#c6f5c6" : "#fcc9c9";
    const x = Math.round(qx(i) - 4);
    const add = (from, to, c, k) => {
      const y = Math.min(from, to), h = Math.max(1, Math.abs(to - from));
      bars.push(<rect key={i + k} x={x} y={y} width="8" height={h} fill={c} />);
      bars.push(<path key={i + k + "g"} d={`M${x + 0.5} ${y}v${h}`} stroke="rgb(255 255 255 / 0.7)" />);
      bars.push(<path key={i + k + "h"} d={`M${x + 4.5} ${y}v${h}`} stroke="rgb(255 255 255 / 0.18)" />);
    };
    if (a !== undefined) add(zero, a, a < zero ? (rising ? "#1212ff" : "#ff00f0") : rising ? "#0fa0a0" : "#ff1414", "a");
    if (a === undefined || (s - zero) * (a - zero) < 0) add(zero, s, pale, "b");
    else if (Math.abs(s - zero) > Math.abs(a - zero)) add(a, s, pale, "c");
  }
  return (
    <svg viewBox="23 732 1577 113" className="block h-auto w-full bg-white" fontFamily={FONT} role="img" aria-label="Awesome Evolution Doc">
      <Grid top={732} bottom={831} rows={[751, 769, 787, 823]} />
      <g shapeRendering="crispEdges">{bars}</g>
      <path d={`M23 805.500H${qx(157) + 4}`} stroke="#1010f0" strokeWidth="2" />
      {segments(AO, (a, b) => (b <= a ? "#04042c" : "#b000b4")).map((s) => <path key={s.i} d={s.d} stroke={s.c} strokeWidth="3" strokeLinecap="round" />)}
      {segments(AO_SLOW, (a, b) => (b <= a ? "#64f864" : "#ff9400")).map((s) => <path key={s.i} d={s.d} stroke={s.c} strokeWidth="3" strokeLinecap="round" />)}
      {[[29, 822], [49, 807], [61, 836], [97, 808], [136, 716], [146, 712], [148, 690], [155, 640]].map(([i, y]) => <Up key={i} x={qx(i)} y={545 + y / 3} c="#00f0ff" />)}
      {[[46, 819], [54, 780], [83, 746], [115, 724], [139, 710], [147, 712], [151, 675]].map(([i, y]) => <Down key={i} x={qx(i)} y={545 + y / 3} c="#fff000" />)}
      <AxisLine top={732} bottom={831} />
      <path d="M23 831.500H1566" stroke="#6f8a96" />
      <path d="M1566 769.500H1570M1566 787.500H1570M1566 823.500H1570" stroke="#6f8a96" />
      <path d="M1566 805.500H1569M1566 741.500H1569" stroke="#0000e0" />
      <text x="1571" y="772" fontSize="8" fontWeight="700" fill="#222">10.000</text>
      <text x="1571" y="790" fontSize="8" fontWeight="700" fill="#222">5.000</text>
      <text x="1571" y="826" fontSize="8" fontWeight="700" fill="#222">-5.000</text>
      <Tag y={741} w={25} color="#1818f0" text="17.879" />
      <Tag y={746} w={25} color="#50e850" text="16.679" />
      <Tag y={751} w={25} color="#50e850" text="16.679" />
      {[800, 805, 810].map((y) => <Tag key={y} y={y} w={6} color="#1818f0" text="0" />)}
      {YEARS.map((y) => (
        <g key={y}>
          <path d={`M${Math.round(yearX(y)) + 0.5} 832V834`} stroke="#6f8a96" />
          {y > 1987 && <text x={Math.round(yearX(y))} y="842" fontSize="8" fontWeight="700" fill="#111" textAnchor="middle">{y}</text>}
        </g>
      ))}
    </svg>
  );
}

/* ---------- icons ---------- */
const I = ({ children, size = "size-4" }) => (
  <svg viewBox="0 0 16 16" className={`${size} shrink-0`} fill="none" aria-hidden="true">{children}</svg>
);
const lens = (cx = 6.5, cy = 6) => (
  <>
    <circle cx={cx} cy={cy} r="4" stroke="#333" strokeWidth="1.300" fill="#d6e4ea" />
    <path d={`M${cx + 3} ${cy + 3}L${cx + 6.5} ${cy + 7}`} stroke="#222" strokeWidth="2.200" />
  </>
);
const bell = (
  <>
    <path d="M2 12.500H14L12 10.500V7C12 4 10.500 3 8 3S4 4 4 7V10.500Z" fill="#f6dc10" stroke="#8a7a00" />
    <circle cx="8" cy="13" r="1.500" fill="#d4b000" />
  </>
);
const ellipseIcon = (c, f) => (
  <I><ellipse cx="8" cy="8" rx="6" ry="4" fill={f} stroke={c} strokeWidth="1.300" /><path d="M0 12.500H4M2 10.500V14.500M12 3.500H16M14 1.500V5.500" stroke="#1414e8" /></I>
);
const ray = (c) => <I><circle cx="3.500" cy="8" r="1.500" stroke={c} /><path d="M5 8H16" stroke={c} strokeWidth="1.300" /></I>;
const diag = (c) => <I><path d="M1 15L15 1" stroke={c} strokeWidth="1.500" /></I>;
const flat = (c) => <I><path d="M0 8H16" stroke={c} strokeWidth="2" /></I>;
const corner = (c, f) => (
  <I><rect x="3" y="4.500" width="10.500" height="7.500" stroke={c} strokeWidth="1.300" fill={f} /><path d="M1 12.500H5M3 10.500V14.500M11.500 4H15.500M13.500 2V6" stroke="#1414e8" /></I>
);
const F = <path d="M11.500 15V8.500H15.500M11.500 11.500H15" stroke="#1414e8" strokeWidth="1.800" />;

const TOOLS = [
  ["Cursor", <I><path d="M5 2V12L7.500 10L9 14L10.500 13.500L9 9.500H12Z" fill="#e8eef2" stroke="#5a7080" /></I>],
  ["Lupa", <I>{lens()}</I>],
  ["Lupa de zona", <I><rect x="0.500" y="4.500" width="9" height="8" stroke="#1464d8" strokeDasharray="2 1" /><g transform="translate(2 -1)">{lens()}</g></I>],
  ["Alerta en gráfico", <I>{bell}<path d="M8 4L11 8L15 1" stroke="#1450d8" strokeWidth="1.500" /></I>],
  ["Alerta", <I>{bell}<path d="M1.500 5C1 3.500 1.500 2.500 2.500 1.500M14.500 5C15 3.500 14.500 2.500 13.500 1.500" stroke="#a08c00" /></I>],
  ["Retroceso de Fibonacci", <I><path d="M1 9L3.500 3L6 9H10M0 9H2" stroke="#222" strokeWidth="1.500" /><path d="M6 3H16" stroke="#f0a080" strokeDasharray="2 1" /><path d="M3.500 1V5" stroke="#1414e8" />{F}</I>],
  ["Extensión de Fibonacci", <I><path d="M2 6H15" stroke="#e88070" strokeDasharray="2 1" /><path d="M2 9H10" stroke="#4444e0" strokeDasharray="2 1" />{F}</I>],
  ["Rectángulo azul", corner("#5a96f8", "none")],
  ["Rectángulo rojo", corner("#e01414", "#c8a8ac")],
  ["Flecha", <I><circle cx="3" cy="13" r="1.800" stroke="#222" /><path d="M4.500 11.500L10 6" stroke="#000" strokeWidth="2" /><path d="M7.500 3.500H13V9Z" fill="#000" /></I>],
  ["Texto", <I><rect x="1.500" y="1.500" width="13" height="13" rx="2" fill="#bcd0e6" stroke="#6a9af0" /><path d="M4.500 5H11.500M8 5V12.500" stroke="#222" strokeWidth="2" /></I>],
  ["Bocadillo", <I><circle cx="8" cy="7.500" r="6" fill="#b8d4dc" stroke="#6a9af0" /><path d="M3 11L2 15L6 13" stroke="#6a9af0" /><path d="M5 5H11M8 5V11" stroke="#0a8a1a" strokeWidth="2" /></I>],
  ["Segmento", <I><path d="M4 12L12 4" stroke="#222" strokeWidth="1.300" /><circle cx="3" cy="13" r="1.800" stroke="#222" /><circle cx="13" cy="3.500" r="1.800" stroke="#222" /></I>],
  ["Semirrecta verde clara", ray("#6cf06c")], ["Semirrecta verde", ray("#28a028")], ["Semirrecta verde oscura", ray("#0a7a1a")], ["Semirrecta roja", ray("#f01414")],
  ["Regla", <I><path d="M1 11L11 2L15 6L5 15Z" stroke="#5a6a74" fill="#b4c4cc" /><path d="M4 9L5.500 10.500M6.500 7L8 8.500M9 4.500L10.500 6" stroke="#5a6a74" /></I>],
  ["Canal", <I><path d="M0 3H16" stroke="#28a028" strokeDasharray="2 1" /><path d="M0 14H16" stroke="#e07070" strokeDasharray="2 1" /><path d="M1 11L4 7L7 10L11 5L15 9" stroke="#6aaad0" /></I>],
  ["Elipse roja", ellipseIcon("#f02828", "#c8a4a8")], ["Elipse marrón", ellipseIcon("#8a5a28", "#b0a898")], ["Elipse verde oscura", ellipseIcon("#1a8a3a", "#7cb8a0")], ["Elipse verde", ellipseIcon("#28e828", "#94dca8")],
  ["Línea negra", diag("#2a3a44")], ["Línea verde", diag("#1ea03c")], ["Línea roja", diag("#f01e1e")],
  ["Horizontal negra", flat("#333")], ["Horizontal salmón", flat("#fa8c78")], ["Horizontal verde", flat("#00f014")], ["Horizontal verde oscura", flat("#0a7a1a")],
  ["Horizontal roja", flat("#e01428")], ["Horizontal celeste", flat("#5a96f8")], ["Horizontal azul", flat("#0a0aa0")],
  ["Vertical", <I><path d="M8 0V16" stroke="#333" strokeWidth="1.300" /></I>],
  ["Ángulo", <I><path d="M13 5L1 13H15" stroke="#e05050" /><path d="M6 9C8 9 9 11 9 13" stroke="#1414e8" strokeWidth="2" /><circle cx="13.500" cy="5" r="1.500" stroke="#1414e8" /></I>],
  ["Círculo", <I><circle cx="7.500" cy="8.500" r="5.500" stroke="#f08c50" strokeWidth="1.300" /><path d="M5 8.500H10M7.500 6V11M10 5H14M12 3V7" stroke="#1414e8" /></I>],
  ["Ondas 12345", <I><path d="M1 6L3 14L6 5L9 13L13 2" stroke="#88a0f0" /><path d="M0 5H3M4 13H7M5 7H8M9 10H13M11 2H16M2 3V7M6 11V15M7 5V9M11 8V12M14 0V4" stroke="#1414e8" strokeWidth="1.500" /></I>],
  ["Ondas abc", <I><path d="M2 12L8 3L12 13" stroke="#88a0f0" /><path d="M0 12H4M2 10V14M6 3H10M8 1V5M10 13H14M12 11V15M12 1V5H15V3H12" stroke="#1414e8" strokeWidth="1.200" /></I>],
  ["Aceptar", <I><path d="M1 9L4 6.500L6.500 9.500L13 2L15.500 4.500L6.500 14.500Z" fill="#2ed43c" stroke="#148a28" /></I>],
  ["Me gusta", <I><path d="M1 8H5V14H1ZM5 8L8 2C10 1.500 10 3 9.500 6H14C15.500 7 15 9 14.500 10S14 14 12 14H5Z" fill="#32c846" stroke="#148a28" /></I>],
  ["Borrar", <I><path d="M2 4.500L4.500 2L8 5.500L11.500 2L14 4.500L10.500 8L14 11.500L11.500 14L8 10.500L4.500 14L2 11.500L5.500 8Z" fill="#f01414" stroke="#b40000" /></I>],
];

const Chevron = () => (
  <svg viewBox="0 0 6 4" className="pointer-events-none h-1 w-1.5 shrink-0" aria-hidden="true"><path d="M0.500 0.500L3 3L5.500 0.500" stroke="#222" strokeWidth="1.200" fill="none" /></svg>
);
const Sep = () => <span className="h-4 w-px shrink-0 bg-[#6f8a96]" />;
const Pick = ({ label, options }) => (
  <label className="flex items-center gap-1 px-[3px]">
    <select aria-label={label} className="field-sizing-content appearance-none bg-transparent outline-none">
      {options.map((o) => <option key={o}>{o}</option>)}
    </select>
    <Chevron />
  </label>
);
const Frame = ({ children, active }) => (
  <button className={active ? "h-3.5 rounded-xs border border-[#627c88] bg-[#84a0ad] px-px" : "h-3.5 rounded-xs border border-[#7f9dab] bg-[#aecbd7] px-px"}>{children}</button>
);

const Toolbar = () => (
  <header className="flex h-[19px] items-center border-t-2 border-b border-t-[#4f6b7a] border-b-[#4f6b7a] bg-linear-to-b from-[#b4d2de] to-[#9bbdcb]">
    <div className="flex items-center gap-0.5 pl-1">
      <I size="size-3"><path d="M2.500 6V15M8 3V13M13.500 0V10" stroke="#1a8a28" /><path d="M1 8H4V13H1ZM6.500 5H9.500V11H6.500ZM12 2H15V8H12Z" fill="#1eb432" /></I>
      <I size="size-3"><path d="M5 1H7V4H5ZM9 1H11V4H9ZM5 6H7V9H5ZM9 6H11V9H9ZM5 11H7V15H5ZM9 11H11V15H9Z" fill="#7a929e" stroke="#5a707c" /></I>
      <Sep />
    </div>
    <Pick label="Valor" options={["NIKKEI"]} />
    <Sep />
    <div className="flex items-center gap-[3px] px-[3px]">
      {["12s", "144s", "1m", "12m", "56m", "1h", "4h", "D", "W", "M", "Q"].map((t) => <Frame key={t} active={t === "Q"}>{t}</Frame>)}
    </div>
    <Sep />
    <Pick label="Periodo" options={["1 trimestre"]} />
    <Sep />
    <div className="flex items-center gap-[3px] px-[3px]">
      {["5kU", "10kU", "35kU"].map((t) => <Frame key={t} active={t === "10kU"}>{t}</Frame>)}
    </div>
    <Sep />
    <Pick label="Unidades" options={["10 k unidades"]} />
    <Sep />
    <button className="flex items-center gap-1 pr-1 pl-0.5">
      <I size="size-3.5"><path d="M0 4C3 0 5 4 8 7S13 9 16 4" stroke="#e03030" /><path d="M0 8C3 8 5 1 9 3S13 9 16 8" stroke="#1a8a28" /><path d="M1 12H4V16H1ZM9 11H12V16H9Z" fill="#e82020" /><path d="M5 13H8V16H5ZM12 12H15V16H12Z" fill="#1ec832" /></I>
      Indicadores
    </button>
    <button aria-label="Más indicadores" className="flex h-full items-center px-1"><Chevron /></button>
    <Sep />
    <div className="flex items-center gap-1 pl-2">
      <button aria-label="Información" className="grid h-2.5 w-2 place-items-center bg-[#dfe8ec] text-[#8a98a0]">i</button>
      <span className="size-1.5 rounded-full border border-[#6a7c86] bg-[#9aa8b0]" />
      <span className="rounded-xs bg-[#f04848] px-0.5 text-white">-0,13 %</span>
      <span>3 abr 2026</span>
      <span className="rounded-xs border border-[#a8b878] bg-[#cfdc9c] px-0.5 font-normal">Japón 225 Cash (1$)</span>
    </div>
    <div className="ml-auto flex h-full items-center gap-1 pr-0.5">
      <Sep />
      <button aria-label="Sincronizar"><I size="size-3.5"><path d="M8 2C4 2 3 5 3.500 9" stroke="#e83c3c" strokeWidth="3" /><path d="M0 8H7.500L4 13Z" fill="#e83c3c" /><path d="M8 14C12 14 13 11 12.500 7" stroke="#14b428" strokeWidth="3" /><path d="M8.500 8H16L12 3Z" fill="#14b428" /></I></button>
      <Sep />
      <button aria-label="Minimizar"><I size="size-2"><path d="M2 14H14" stroke="#6a8490" strokeWidth="3" /></I></button>
      <button aria-label="Restaurar"><I size="size-2"><path d="M2 6H10V14H2ZM6 6V2H14V10H10" stroke="#6a8490" strokeWidth="2" /></I></button>
      <button aria-label="Cerrar"><I size="size-2"><path d="M2 2L14 14M14 2L2 14" stroke="#6a8490" strokeWidth="2.500" /></I></button>
    </div>
  </header>
);

const CloseDot = () => (
  <I size="size-2.5"><circle cx="8" cy="8" r="7.500" fill="#3c6a9c" /><path d="M5 5L11 11M11 5L5 11" stroke="#fff" strokeWidth="2" /></I>
);
const Check = ({ label }) => (
  <label className="flex h-full items-center gap-[3px] border-r border-[#6f8a96] px-0.5">
    <input type="checkbox" className="size-[7px] appearance-none border border-[#7a929e] bg-[#c8dce4]" />{label}
  </label>
);
const PanelTitle = ({ children, dual }) => (
  <div className="absolute top-0 left-0 flex h-[13px] items-center border-r border-b border-[#6f8a96] bg-[#c4d8e2]">
    <button aria-label="Cerrar panel" className="flex h-full items-center border-r border-[#6f8a96] px-px"><CloseDot /></button>
    <h2 className="flex items-center gap-[3px] px-0.5">
      <span className={dual ? "h-2 w-[7px] border-l-3 border-[#7a929e] bg-black" : "size-[7px] bg-[#7a929e]"} />{children}
    </h2>
  </div>
);

const Sidebar = () => (
  <nav aria-label="Herramientas" className="flex w-[23px] shrink-0 flex-col border-r border-l border-r-[#7f9dab] border-l-[#4f6b7a] bg-[#9dbccb]">
    <button aria-label="Subir" className="grid h-2.5 shrink-0 place-items-center border-b border-[#7f9dab]"><span className="rotate-180"><Chevron /></span></button>
    <div className="flex min-h-0 flex-1 flex-col">
      {TOOLS.map(([name, icon], k) => (
        <button key={name} aria-label={name} title={name} className={k === 0 ? "grid min-h-0 flex-1 place-items-center rounded-xs border border-[#7590a0] bg-[#8eaab8]" : "grid min-h-0 flex-1 place-items-center"}>{icon}</button>
      ))}
    </div>
    <div className="grid h-1.5 shrink-0 place-items-center overflow-hidden"><svg viewBox="0 0 8 6" className="h-1 w-1.5" aria-hidden="true"><path d="M4 1L8 6H0Z" fill="#f0a028" /></svg></div>
    <button aria-label="Bajar" className="grid h-2 shrink-0 place-items-center border-y border-[#7f9dab] bg-[#b4d0dc]"><Chevron /></button>
    <button aria-label="Configurar" className="grid h-8 shrink-0 place-items-center">
      <I><rect x="3" y="4" width="10" height="10" fill="#e8eef2" stroke="#7a929e" /><path d="M5 9L8 12M6 12L11 6" stroke="#e07070" /><circle cx="4" cy="4" r="3.500" fill="#148a28" /><path d="M4 2V6" stroke="#fff" /><path d="M9.500 9.500L14.500 14.500" stroke="#333" strokeWidth="2.500" /><circle cx="9" cy="9" r="2" stroke="#333" /></I>
    </button>
    <button aria-label="Más herramientas" className="grid h-4 shrink-0 place-items-center"><I><path d="M1 7H4M6.500 7H9.500M12 7H15" stroke="#222" strokeWidth="2.500" /><path d="M8 11H13L10.500 14Z" fill="#111" /></I></button>
  </nav>
);

const BottomBar = () => (
  <footer className="flex h-4 items-center border-t border-[#7f9dab] bg-[#9dbccb]">
    <button aria-label="Dibujo" className="grid w-[23px] place-items-center"><I size="size-3.5"><path d="M1 2L6 12L10 2" stroke="#c05030" strokeWidth="1.500" /><path d="M6 14L12 3L15 5L9 15Z" fill="#f0c030" stroke="#806020" /><path d="M1 14H7" stroke="#d04040" strokeWidth="2" /></I></button>
    <div className="flex items-center gap-1 pl-0.5">
      <button aria-label="Compartir"><I size="size-3.5"><path d="M3 8L12 3M3 8L12 13" stroke="#f2f6f8" strokeWidth="2" /><circle cx="3" cy="8" r="2.500" fill="#f2f6f8" /><circle cx="12" cy="3" r="2" fill="#f2f6f8" /><path d="M10 12H16L13 15Z" fill="#111" /></I></button>
      <button aria-label="Chat"><I size="size-3.5"><path d="M1 1H11V9H1Z" fill="#7ab0f0" /><path d="M3 4H15V13H10L7 16V13H3Z" fill="#2c6ae0" /><path d="M5 8.500H13" stroke="#fff" strokeDasharray="2 1" strokeWidth="2" /></I></button>
      <button aria-label="Órdenes"><I size="size-3.5"><rect x="2" y="1" width="12" height="14" fill="#dce6ea" stroke="#48606c" /><path d="M4 3H7V6H4Z" fill="#e02828" /><path d="M4 10H8V14H4Z" fill="#1eb432" /><path d="M9 3H12V6H9Z" fill="#e02828" /><path d="M6 11L11 5" stroke="#333" strokeWidth="1.500" /></I></button>
      <button aria-label="Libro"><I size="size-3.5"><path d="M3 1H9V4H3ZM1 5H9V8H1Z" fill="#e02828" /><path d="M5 9H9V12H5ZM2 13H9V16H2Z" fill="#e02828" /><path d="M9 1H15V4H9ZM9 5H13V8H9ZM9 9H15V12H9ZM9 13H12V16H9Z" fill="#14a028" /></I></button>
      <button aria-label="Ventanas"><I size="size-3.5"><rect x="1" y="1" width="10" height="8" fill="#e8f0f4" stroke="#1c5ac8" strokeWidth="1.500" /><rect x="4" y="6" width="11" height="9" fill="#fff" stroke="#1c5ac8" strokeWidth="1.500" /><path d="M5.500 13L8 10L10 12L13.500 9" stroke="#14a028" /></I></button>
      <button aria-label="Plegar" className="text-xs leading-3 font-normal text-[#2a3a44]">«</button>
    </div>
    <div className="ml-0.5 flex h-3 flex-1 items-stretch border border-[#7f9dab] bg-[#b0d0de]">
      <button aria-label="Desplazar a la izquierda" className="w-2.5 border-r border-[#7f9dab] leading-2">‹</button>
      <div className="w-[86px] border-r border-[#7f9dab] bg-[#94b2c0]" />
      <div className="flex-1 bg-linear-to-b from-[#bcdae6] to-[#a4c6d4]" />
      <div className="w-2 border-l border-[#7f9dab] bg-[#94b2c0]" />
      <button aria-label="Desplazar a la derecha" className="w-2.5 border-l border-[#7f9dab] leading-2">›</button>
    </div>
    <div className="flex items-center gap-1 overflow-hidden pl-1.5">
      <button aria-label="Deshacer"><I size="size-3.5"><path d="M3 6H9C13 6 14 10 10 14" stroke="#6a98d0" strokeWidth="2" /><path d="M0 6L6 1V11Z" fill="#6a98d0" /></I></button>
      <button aria-label="Rehacer"><I size="size-3.5"><path d="M13 6H7C3 6 2 10 6 14" stroke="#80a8c8" strokeWidth="2" /><path d="M16 6L10 1V11Z" fill="#80a8c8" /></I></button>
      <button aria-label="Ajustes"><I size="size-3.5"><rect x="9" y="1" width="6" height="13" fill="#28c83c" /><rect x="1" y="8" width="6" height="7" fill="#e83c3c" /><path d="M3 13L11 5" stroke="#444" strokeWidth="3" /><path d="M3 13L11 5" stroke="#eee" strokeWidth="1.500" /><circle cx="12" cy="4" r="2.500" stroke="#333" /></I></button>
      <button aria-label="Ajustar zoom"><I size="size-3.5">{lens(6, 6)}<path d="M14 0V8M12.500 2L14 0L15.500 2M12.500 6L14 8L15.500 6M0 14H7M2 12.500L0 14L2 15.500" stroke="#1414e8" /></I></button>
      <button aria-label="Reducir"><I size="size-3.5">{lens()}<path d="M4.500 6H8.500" stroke="#1414c8" strokeWidth="1.500" /></I></button>
      <button aria-label="Ampliar"><I size="size-3.5">{lens()}<path d="M4.500 6H8.500M6.500 4V8" stroke="#1414c8" strokeWidth="1.500" /></I></button>
      <button aria-label="Más"><I size="size-3.5"><path d="M1 4H16" stroke="#222" strokeWidth="2" strokeDasharray="2 1" /><path d="M9 7V13M6 10L9 14L12 10" stroke="#1464d8" strokeWidth="1.500" /></I></button>
    </div>
  </footer>
);

export default function App() {
  return (
    <div className="flex min-h-screen flex-col overflow-hidden bg-[#9dbccb] font-['Liberation_Sans',Arial,sans-serif] text-[8px] leading-[10px] font-bold whitespace-nowrap text-[#111]">
      <Toolbar />
      <div className="flex">
        <Sidebar />
        <main className="min-w-0 flex-1">
          <section className="relative">
            <PriceChart />
            <div className="absolute top-0 left-0 flex h-[13px] items-center border-r border-b border-[#6f8a96] bg-[#c4d8e2]">
              <div className="flex h-full items-center gap-px border-r border-[#6f8a96] px-px">
                <button aria-label="Bajar panel"><I size="size-2.5"><rect width="16" height="16" rx="2" fill="#f4f8fa" /><path d="M8 3V8" stroke="#e01414" strokeWidth="4" /><path d="M3 8H13L8 13Z" fill="#e01414" /></I></button>
                <button aria-label="Subir panel"><I size="size-2.5"><rect width="16" height="16" rx="2" fill="#f4f8fa" /><path d="M8 8V13" stroke="#14b428" strokeWidth="4" /><path d="M3 8H13L8 3Z" fill="#14b428" /></I></button>
                <button aria-label="Cerrar panel"><CloseDot /></button>
              </div>
              <Check label="Precio" />
              <button aria-label="Lista" className="flex h-full items-center border-r border-[#6f8a96] px-0.5"><I size="size-2.5"><path d="M1 3H4M1 8H4M1 13H4M6 3H15M6 8H15M6 13H15" stroke="#222" strokeWidth="1.500" /></I></button>
              <Check label="Cierre (W)" />
              <span className="flex h-full items-center gap-0.5 border-r border-[#6f8a96] px-0.5"><span className="size-2 bg-[#7a929e]" />Tunel Domenec v4 (t t t t t)</span>
              <span className="flex h-full items-center gap-[3px] px-0.5">
                <svg viewBox="0 0 8 8" className="size-2" aria-hidden="true"><path d="M0 0H2V8H0Z" fill="#111" /><path d="M2 0H4V8H2Z" fill="#1e64e8" /><path d="M4 0H6V8H4Z" fill="#111" /><path d="M6 0H8V8H6Z" fill="#e020a0" /></svg>
                Control Total Doc v.6
              </span>
            </div>
            <div className="pointer-events-none absolute top-[15px] left-[9px] text-black">
              <h1 className="text-[32px] leading-8">NIKKEI, Q</h1>
              <p className="text-xl leading-7">Japón 225 Cash (1$)</p>
            </div>
          </section>
          <section className="relative"><TrainsChart /><PanelTitle dual>Sistema de trenes Doc v4 (f f)</PanelTitle></section>
          <section className="relative"><WillyChart /><PanelTitle>Willy Doc (t)</PanelTitle></section>
          <section className="relative"><AwesomeChart /><PanelTitle>Awesome Evolution Doc</PanelTitle></section>
        </main>
      </div>
      <BottomBar />
    </div>
  );
}
